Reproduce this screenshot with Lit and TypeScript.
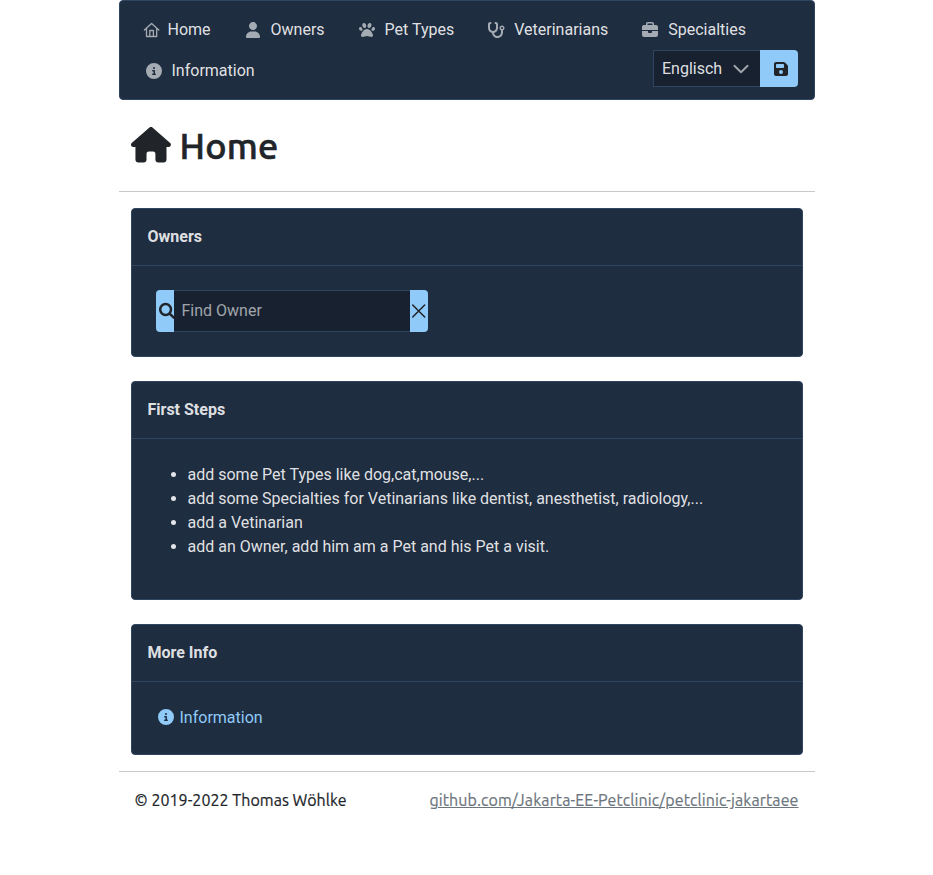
import { LitElement, html, css, svg } from "lit";
import { customElement, property } from "lit/decorators.js";

const ICONS: Record<string, { box: string; d: string }> = {
  house: {
    box: "0 0 576 512",
    d: "M575.8 255.5c0 18-15 32.1-32 32.1h-32l.7 160.2c0 2.7-.2 5.4-.5 8.1V472c0 22.1-17.9 40-40 40H456c-1.1 0-2.2 0-3.3-.1c-1.4 .1-2.8 .1-4.2 .1H416 392c-22.1 0-40-17.9-40-40V448 384c0-17.7-14.3-32-32-32H256c-17.7 0-32 14.3-32 32v64 24c0 22.1-17.9 40-40 40H160 128.1c-1.5 0-3-.1-4.5-.2c-1.2 .1-2.4 .2-3.6 .2H104c-22.1 0-40-17.9-40-40V360c0-.9 0-1.9 .1-2.8V287.6H32c-18 0-32-14-32-32.1c0-9 3-17 10-24L266.4 8c7-7 15-8 22-8s15 2 21 7L564.8 231.5c8 7 12 15 11 24z",
  },
  user: {
    box: "0 0 448 512",
    d: "M224 256c70.7 0 128-57.31 128-128s-57.3-128-128-128C153.3 0 96 57.31 96 128S153.3 256 224 256zM274.7 304H173.3C77.61 304 0 381.6 0 477.3c0 19.14 15.52 34.67 34.66 34.67h378.7C432.5 512 448 496.5 448 477.3C448 381.6 370.4 304 274.7 304z",
  },
  paw: {
    box: "0 0 512 512",
    d: "M226.5 92.9c14.3 42.9-.3 86.2-32.6 96.8s-70.1-15.6-84.4-58.5s.3-86.2 32.6-96.8s70.1 15.6 84.4 58.5zM100.4 198.6c18.9 32.4 14.3 70.1-10.2 84.1s-59.7-.9-78.5-33.3S-2.7 179.3 21.8 165.3s59.7 .9 78.5 33.3zM69.2 401.2C121.6 259.9 214.7 224 256 224s134.4 35.9 186.8 177.2c3.6 9.7 5.2 20.1 5.2 30.5v1.6c0 25.8-20.9 46.7-46.7 46.7c-11.5 0-22.9-1.4-34-4.2l-88-22c-15.3-3.8-31.3-3.8-46.6 0l-88 22c-11.1 2.8-22.5 4.2-34 4.2C84.9 480 64 459.1 64 433.3v-1.6c0-10.4 1.6-20.8 5.2-30.5zM421.8 282.7c-24.5-14-29.1-51.7-10.2-84.1s54-47.3 78.5-33.3s29.1 51.7 10.2 84.1s-54 47.3-78.5 33.3zM310.1 189.7c-32.3-10.6-46.9-53.9-32.6-96.8s52.1-69.1 84.4-58.5s46.9 53.9 32.6 96.8s-52.1 69.1-84.4 58.5z",
  },
  stethoscope: {
    box: "0 0 576 512",
    d: "M142.4 21.9c5.6 16.8-3.5 34.9-20.2 40.5L96 71.1V192c0 53 43 96 96 96s96-43 96-96V71.1l-26.1-8.7c-16.8-5.6-25.8-23.7-20.2-40.5s23.7-25.8 40.5-20.2l26.1 8.7C334.4 19.1 352 43.5 352 71.1V192c0 77.2-54.6 141.6-127.3 156.7C231 404.6 278.4 448 336 448c61.9 0 112-50.1 112-112V265.3c-28.3-12.3-48-40.5-48-73.3c0-44.2 35.8-80 80-80s80 35.8 80 80c0 32.8-19.7 61-48 73.3V336c0 97.2-78.8 176-176 176c-92.9 0-168.9-71.9-175.5-163.1C87.2 334.2 32 269.6 32 192V71.1c0-27.5 17.6-52 43.8-60.7l26.1-8.7c16.8-5.6 34.9 3.5 40.5 20.2zM480 224c17.7 0 32-14.3 32-32s-14.3-32-32-32s-32 14.3-32 32s14.3 32 32 32z",
  },
  briefcase: {
    box: "0 0 512 512",
    d: "M184 48H328c4.4 0 8 3.6 8 8V96H176V56c0-4.4 3.6-8 8-8zm-56 8V96H64C28.7 96 0 124.7 0 160v96H192 320 512V160c0-35.3-28.7-64-64-64H384V56c0-30.9-25.1-56-56-56H184c-30.9 0-56 25.1-56 56zM512 288H320v32c0 17.7-14.3 32-32 32H224c-17.7 0-32-14.3-32-32V288H0V416c0 35.3 28.7 64 64 64H448c35.3 0 64-28.7 64-64V288z",
  },
  info: {
    box: "0 0 512 512",
    d: "M256 512A256 256 0 1 0 256 0a256 256 0 1 0 0 512zM216 336h24V272H216c-13.3 0-24-10.7-24-24s10.7-24 24-24h48c13.3 0 24 10.7 24 24v88h8c13.3 0 24 10.7 24 24s-10.7 24-24 24H216c-13.3 0-24-10.7-24-24s10.7-24 24-24zm40-208a32 32 0 1 1 0 64 32 32 0 1 1 0-64z",
  },
  save: {
    box: "0 0 448 512",
    d: "M64 32C28.7 32 0 60.7 0 96V416c0 35.3 28.7 64 64 64H384c35.3 0 64-28.7 64-64V173.3c0-17-6.7-33.3-18.7-45.3L352 50.7C340 38.7 323.7 32 306.7 32H64zm0 96c0-17.7 14.3-32 32-32H288c17.7 0 32 14.3 32 32v64c0 17.7-14.3 32-32 32H96c-17.7 0-32-14.3-32-32V128zM224 288a64 64 0 1 1 0 128 64 64 0 1 1 0-128z",
  },
};

const LINES: Record<string, { width: number; d: string }> = {
  "home-line": { width: 1.3, d: "M.4 8 7.6 1.5l7.2 6.5M2.5 6.4v8.1h10.2V6.4M5.8 14.3V8.5h3.6v5.8" },
  chevron: { width: 1.9, d: "M1.4 4.8 8 11.2l6.6-6.4" },
  times: { width: 1.5, d: "M1.7 2l12 12M13.7 2l-12 12" },
  search: { width: 2.5, d: "M12 6.5a5.4 5.4 0 1 1-10.8 0a5.4 5.4 0 1 1 10.8 0M10.6 10.5l4.2 4.2" },
};

@customElement("app-icon")
export class AppIcon extends LitElement {
  @property() name = "";
  static styles = css`
    :host { display: flex; justify-content: center; flex: none; width: 20px; height: 16px; }
    svg { display: block; height: 100%; fill: currentColor; overflow: visible; }
    .line { fill: none; stroke: currentColor; stroke-linecap: round; stroke-linejoin: round; }
  `;
  render() {
    const solid = ICONS[this.name];
    if (solid) return html`<svg viewBox=${solid.box}>${svg`<path fill-rule="evenodd" d=${solid.d}></path>`}</svg>`;
    const line = LINES[this.name];
    return html`<svg class="line" viewBox="0 0 16 16" stroke-width=${line?.width ?? 1}>${svg`<path d=${line?.d ?? ""}></path>`}</svg>`;
  }
}

@customElement("app-panel")
export class AppPanel extends LitElement {
  @property() heading = "";
  static styles = css`
    :host { display: block; box-sizing: border-box; border: 1px solid #304562; border-radius: 4px; background: #1f2d40; color: rgba(255, 255, 255, 0.87); }
    .heading { height: 56px; line-height: 55px; padding: 0 16px; border-bottom: 1px solid #304562; font-weight: 700; }
  `;
  render() {
    return html`<div class="heading">${this.heading}</div><slot></slot>`;
  }
}

@customElement("app-root")
export class AppRoot extends LitElement {
  static styles = css`
    :host { display: block; width: 696px; margin: 0 auto; font: 16px/24px Roboto, sans-serif; color: #212529; }
    * { box-sizing: border-box; }
    nav { height: 100px; border: 1px solid #304562; border-radius: 4px; background: #1f2d40; color: rgba(255, 255, 255, 0.87); padding: 17px 16px 0 24px; }
    .row { display: flex; gap: 32px; height: 24px; }
    .second { display: flex; justify-content: space-between; margin-top: 8px; }
    .item { display: flex; align-items: center; gap: 8px; }
    .item .narrow { width: 16px; }
    .item app-icon { color: rgba(255, 255, 255, 0.6); }
    .second .item { height: 24px; margin-top: 9px; }
    .language { display: flex; width: 145px; height: 37px; }
    .select { display: flex; flex: 1; align-items: center; justify-content: space-between; padding: 0 11px 0 8.5px; border: 1px solid #304562; border-right: 0; background: #17212f; }
    .select app-icon { color: rgba(255, 255, 255, 0.6); width: 16px; }
    .save { display: flex; align-items: center; justify-content: center; width: 38px; padding-left: 4px; border-radius: 0 4px 4px 0; background: #90caf9; color: #212529; }
    header { display: flex; align-items: center; gap: 9px; height: 92px; padding-left: 12.5px; border-bottom: 1px solid #c8c9ca; }
    header app-icon { width: 39.5px; height: 35.5px; margin-bottom: 1px; }
    h1 { margin: 0; font: 500 36px/44px Ubuntu, "Noto Sans", sans-serif; letter-spacing: 0.2px; -webkit-text-stroke: 0.6px currentColor; }
    main { display: grid; gap: 24px; padding: 16px 12px; border-bottom: 1px solid #c8c9ca; }
    .owners { height: 149px; }
    .steps { height: 219px; }
    .more { height: 131px; }
    .search { display: flex; width: 272px; height: 42px; margin: 24px; }
    .button { display: flex; align-items: center; width: 18px; background: #90caf9; color: #212529; overflow: hidden; }
    .find { border-radius: 4px 0 0 4px; padding-left: 3px; }
    .find app-icon { width: 16px; }
    .clear { border-radius: 0 4px 4px 0; justify-content: center; }
    .clear app-icon { width: 16px; }
    .field { flex: 1; padding: 8px; border: solid #304562; border-width: 1px 0; background: #17212f; color: rgba(255, 255, 255, 0.6); }
    ul { margin: 24px 0 0; padding-left: 56px; }
    .link { display: flex; align-items: center; gap: 4px; margin: 24px; color: #90caf9; }
    .link app-icon { margin-bottom: 2px; }
    footer { display: flex; justify-content: space-between; padding: 16px; font-family: Ubuntu, "Noto Sans", sans-serif; -webkit-text-stroke: 0.2px currentColor; }
    .copy { letter-spacing: 0.04px; }
    .repo { color: #6c757d; text-decoration: underline; letter-spacing: 0.1px; }
  `;

  private items = [
    ["home-line", "Home"],
    ["user", "Owners"],
    ["paw", "Pet Types"],
    ["stethoscope", "Veterinarians"],
    ["briefcase", "Specialties"],
  ];

  render() {
    return html`
      <nav>
        <div class="row">
          ${this.items.map(
            ([icon, label], i) => html`<a class="item"><app-icon class=${i ? "" : "narrow"} name=${icon}></app-icon><span>${label}</span></a>`
          )}
        </div>
        <div class="second">
          <a class="item"><app-icon name="info"></app-icon><span>Information</span></a>
          <div class="language">
            <div class="select"><span>Englisch</span><app-icon name="chevron"></app-icon></div>
            <div class="save"><app-icon name="save"></app-icon></div>
          </div>
        </div>
      </nav>
      <header><app-icon name="house"></app-icon><h1>Home</h1></header>
      <main>
        <app-panel class="owners" heading="Owners">
          <div class="search">
            <div class="button find"><app-icon name="search"></app-icon></div>
            <div class="field">Find Owner</div>
            <div class="button clear"><app-icon name="times"></app-icon></div>
          </div>
        </app-panel>
        <app-panel class="steps" heading="First Steps">
          <ul>
            <li>add some Pet Types like dog,cat,mouse,...</li>
            <li>add some Specialties for Vetinarians like dentist, anesthetist, radiology,...</li>
            <li>add a Vetinarian</li>
            <li>add an Owner, add him am a Pet and his Pet a visit.</li>
          </ul>
        </app-panel>
        <app-panel class="more" heading="More Info">
          <a class="link"><app-icon name="info"></app-icon><span>Information</span></a>
        </app-panel>
      </main>
      <footer><span class="copy">© 2019-2022 Thomas Wöhlke</span><a class="repo">github.com/Jakarta-EE-Petclinic/petclinic-jakartaee</a></footer>
    `;
  }
}
